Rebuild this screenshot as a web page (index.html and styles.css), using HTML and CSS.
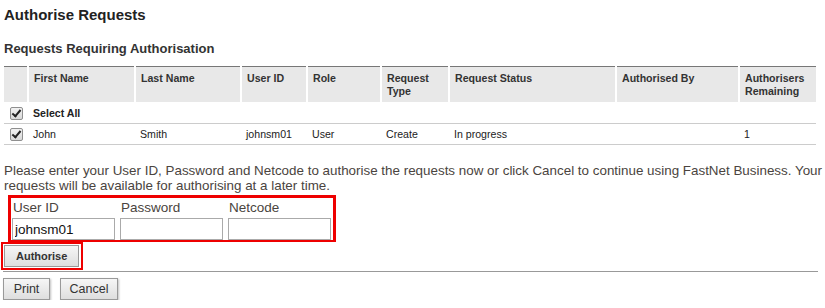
FILE: index.html
```html
<!doctype html>
<html>
  <head>
    <meta charset="UTF-8" />
    <title>Authorise Requests</title>
    <link rel="stylesheet" href="styles.css">
  </head>
  <body>
    <div class="page">
      <h1>Authorise Requests</h1>
      <h2>Requests Requiring Authorisation</h2>
      <table class="requests">
        <colgroup>
          <col class="col-check" />
          <col class="col-first" />
          <col class="col-last" />
          <col class="col-user" />
          <col class="col-role" />
          <col class="col-type" />
          <col class="col-status" />
          <col class="col-by" />
          <col class="col-rem" />
        </colgroup>
        <thead>
          <tr>
            <th></th>
            <th>First Name</th>
            <th>Last Name</th>
            <th>User ID</th>
            <th>Role</th>
            <th>Request Type</th>
            <th>Request Status</th>
            <th>Authorised By</th>
            <th>Authorisers Remaining</th>
          </tr>
        </thead>
        <tbody>
          <tr class="select-all">
            <td><input type="checkbox" checked /></td>
            <td colspan="8">Select All</td>
          </tr>
          <tr>
            <td><input type="checkbox" checked /></td>
            <td>John</td>
            <td>Smith</td>
            <td>johnsm01</td>
            <td>User</td>
            <td>Create</td>
            <td>In progress</td>
            <td></td>
            <td>1</td>
          </tr>
        </tbody>
      </table>
      <p class="intro">
        Please enter your User ID, Password and Netcode to authorise the requests now or click Cancel to continue using FastNet Business. Your requests will be available for authorising at a later time.
      </p>
      <div class="creds">
        <div class="field">
          <label for="userId">User ID</label>
          <input type="text" id="userId" value="johnsm01" />
        </div>
        <div class="field">
          <label for="password">Password</label>
          <input type="password" id="password" />
        </div>
        <div class="field">
          <label for="netcode">Netcode</label>
          <input type="text" id="netcode" />
        </div>
      </div>
      <div class="auth-wrap">
        <button class="btn" type="button">Authorise</button>
      </div>
      <div class="actions">
        <button class="btn btn-lg btn-print" type="button">Print</button>
        <button class="btn btn-lg btn-cancel" type="button">Cancel</button>
      </div>
    </div>
  </body>
</html>
```

FILE: styles.css
```css
body {
  font-family: "Liberation Sans", Arial, sans-serif;
  margin: 0;
  background: white;
  color: #333;
}
.page {
  padding: 0 4px;
  width: 812px;
}
h1 {
  margin: 0;
  padding-top: 6px;
  font-size: 15px;
  line-height: 18px;
  color: #222;
}
h2 {
  margin: 0;
  padding-top: 17px;
  font-size: 13px;
  line-height: 16px;
  color: #333;
}
.requests {
  margin-top: 9px;
  width: 812px;
  border-collapse: collapse;
  border-top: 1px solid #777;
  font-size: 10.6px;
  table-layout: fixed;
}
.requests th {
  background: #e8e8e8;
  text-align: left;
  vertical-align: top;
  font-weight: bold;
  color: #333;
  padding: 5px 5px 3px;
  height: 27px;
  line-height: 13px;
  border-left: 2px solid white;
}
.requests th:first-child {
  border-left: none;
}
.requests td {
  padding: 0 5px;
  height: 20px;
  border-bottom: 1px solid #ccc;
  color: #222;
}
.requests td:first-child {
  padding: 0 0 0 6px;
}
.select-all td {
  font-weight: bold;
}
.select-all td:first-child {
  padding-top: 1px;
}
.requests input[type="checkbox"] {
  appearance: none;
  -webkit-appearance: none;
  position: relative;
  margin: 0;
  width: 13px;
  height: 13px;
  vertical-align: middle;
  box-sizing: border-box;
  border: 1px solid #8f8f8f;
  border-radius: 2px;
  background: linear-gradient(#f2f2f2, #d8d8d8);
}
.requests input[type="checkbox"]:checked::after {
  content: "";
  position: absolute;
  left: 3px;
  top: 0;
  width: 3px;
  height: 7px;
  border: solid #222;
  border-width: 0 2px 2px 0;
  transform: rotate(40deg);
}
.col-check { width: 24px; }
.col-first { width: 107px; }
.col-last { width: 106px; }
.col-user { width: 66px; }
.col-role { width: 74px; }
.col-type { width: 68px; }
.col-status { width: 167px; }
.col-by { width: 123px; }
.col-rem { width: 77px; }
.intro {
  margin: 18px -10px 0 0;
  font-size: 13.4px;
  line-height: 15px;
  color: #4a4440;
}
.creds {
  display: flex;
  gap: 5px;
  width: 320px;
  margin: 2px 0 0 4px;
  padding: 0 1px 0 1px;
  border: 3px solid #e00;
  border-bottom-width: 2px;
}
.field {
  display: flex;
  flex-direction: column;
}
.field label {
  font-size: 13.5px;
  line-height: 20px;
  padding-left: 1px;
  color: #4a4440;
}
.field input {
  width: 103px;
  height: 22px;
  box-sizing: border-box;
  margin: 0;
  border: 1px solid #aaa;
  padding: 1px 2px;
  font-family: inherit;
  font-size: 13.5px;
  color: #111;
}
.auth-wrap {
  display: inline-block;
  margin-left: -3px;
  padding: 1px 2px 1px 1px;
  border: 2px solid #e00;
}
.btn {
  font-family: inherit;
  font-size: 11px;
  font-weight: bold;
  color: #333;
  height: 22px;
  padding: 0 11px;
  border: 1px solid #999;
  border-radius: 0;
  background: linear-gradient(#f6f6f6, #dedede);
  cursor: pointer;
  display: block;
}
.actions {
  display: flex;
  gap: 10px;
  margin-top: 1px;
  border-top: 1px solid #999;
  padding-top: 6px;
  width: 815px;
  margin-left: -1px;
}
.btn-lg {
  font-size: 12.5px;
  font-weight: normal;
  height: 22px;
  box-shadow: 1px 1px 2px rgba(0, 0, 0, 0.25);
}
.btn-print {
  width: 47px;
  padding: 0;
}
.btn-cancel {
  width: 58px;
  padding: 0;
}
```
